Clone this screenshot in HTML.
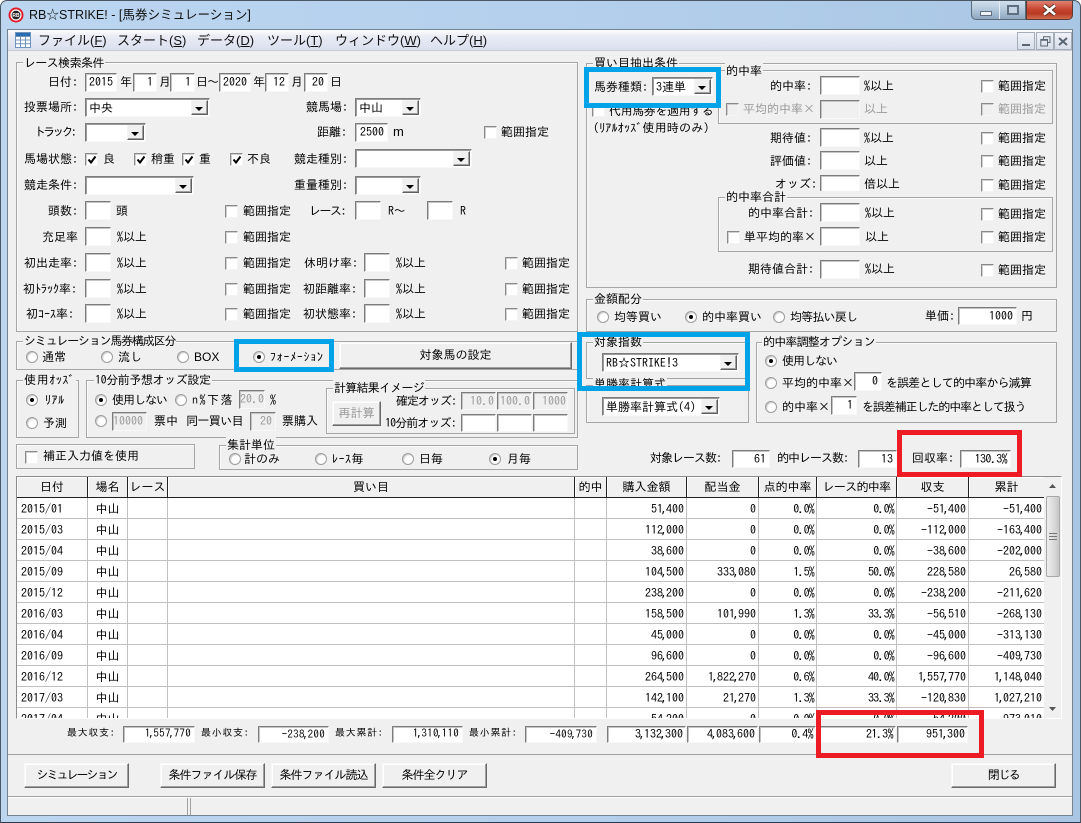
<!DOCTYPE html>
<html lang="ja"><head><meta charset="utf-8"><title>RB☆STRIKE!</title>
<style>
html,body{margin:0;padding:0;width:1081px;height:823px;overflow:hidden;background:#fff}
#w{position:absolute;left:0;top:0;width:1081px;height:823px;overflow:hidden;font:12px/16px "IPAGothic","Noto Sans CJK JP",sans-serif;color:#000;background:linear-gradient(90deg,#bcd6f0,#b4d0ec 50%,#a9c6e4);border-radius:7px 7px 0 0;box-sizing:border-box;border:1px solid #4a5866;border-bottom-color:#2f3a46}
#w *{box-sizing:border-box}
#f{position:absolute;left:-1px;top:-1px;width:1081px;height:823px}
#f div,#f i,#f b,#f svg,#f table{position:absolute}
.t,i{font-style:normal;white-space:nowrap;height:16px;line-height:16px}
em{font-style:normal;margin:0 -1.5px}
.d{color:#9a9a9a}
.i,.c{background:#fff;border:1px solid;border-color:#7c7c7c #f8f8f8 #f8f8f8 #7c7c7c;box-shadow:inset 1px 1px 0 #c4c4c4;font-weight:400;text-align:right;padding-right:3px;line-height:16px;white-space:nowrap}
.c{text-align:left;padding:1px 0 0 3px;box-shadow:inset 1px 1px 0 #9a9a9a}
.dis{background:#f0f0f0;color:#9a9a9a}
.p{letter-spacing:-.6px}
.c s{position:absolute;right:1px;top:1px;bottom:1px;width:17px;background:#f0f0f0;border:1px solid;border-color:#f4f4f4 #5f5f5f #5f5f5f #f4f4f4;box-shadow:inset -1px -1px 0 #a0a0a0;display:block;text-decoration:none}
.c s:after{content:"";position:absolute;left:3px;top:6px;border:4px solid transparent;border-top:4px solid #000;border-bottom:0}
.k{width:13px;height:13px;background:#fff;border:1px solid;border-color:#8a8a8a #f4f4f4 #f4f4f4 #8a8a8a;box-shadow:inset 1px 1px 0 #d0d0d0}
.k.x{background:#f0f0f0}
.k svg{left:1px;top:1px}
.r{width:12px;height:12px;border-radius:50%;background:#fff;border:1px solid #9c9c9c;box-shadow:inset 1px 1px 1px #c8c8c8}
.r.on:after{content:"";position:absolute;left:3px;top:3px;width:4px;height:4px;border-radius:50%;background:#000}
.g{border:1px solid #a6a6a6;box-shadow:inset 1px 1px 0 #fbfbfb}
.b{background:#f0f0f0;border:1px solid;border-color:#f8f8f8 #696969 #696969 #f8f8f8;box-shadow:inset -1px -1px 0 #a0a0a0,inset 1px 1px 0 #fff;text-align:center;white-space:nowrap}
.l{background:#f0f0f0;padding:0 1px}
.blue{border:5px solid #00a2e8}
.red{border:5px solid #ed1c24}
.m{font:13px/16px "Liberation Sans","Noto Sans CJK JP",sans-serif;color:#111}
.tot{font-size:11px;letter-spacing:.3px;line-height:15px}
table{border-collapse:separate;border-spacing:0;table-layout:fixed;left:0;top:0;width:1028px}
td,th{font-weight:400;padding:2px 2px 0 0;height:21px;line-height:18px;text-align:right;border-right:1px solid #c0c0c0;border-bottom:1px solid #c0c0c0;white-space:nowrap;overflow:hidden;background:#fff}
th{background:#f0f0f0;text-align:center;border-right:1px solid #222;border-bottom:1px solid #222;box-shadow:inset 1px 1px 0 #fff;padding:0;line-height:20px}
td:first-child{text-align:left;padding-left:4px}
td:nth-child(2){text-align:center;padding:2px 0 0}
td:nth-child(8),td:nth-child(9){letter-spacing:-.8px}
</style></head><body>
<div id="w"><div id="f">

<svg style="left:8px;top:7px" width="16" height="16" viewBox="0 0 16 16"><circle cx="8" cy="8" r="7.5" fill="#e01b24"/><circle cx="8" cy="8" r="5.6" fill="#fff"/><circle cx="8" cy="8" r="4.4" fill="#222"/><text x="8" y="10" font-size="5" text-anchor="middle" fill="#fff" font-family="Liberation Sans" font-weight="700">RB</text></svg>
<i style="left:29px;top:7px;font:12.55px/16px 'Liberation Sans','Noto Sans CJK JP',sans-serif;height:16px;color:#111">RB☆STRIKE! - [馬券シミュレーション]</i>

<div style="left:971px;top:0;width:55px;height:20px;background:linear-gradient(#d4e2ef,#b4c8dc 50%,#8ea8c0);border:1px solid #5a6a7a;border-top:0;border-radius:0 0 0 5px"></div>
<div style="left:999px;top:0;width:1px;height:19px;background:#e4edf5"></div>
<div style="left:1026px;top:0;width:47px;height:20px;background:linear-gradient(#e0897a,#c8442e 50%,#b83a22 70%,#d06a50);border:1px solid #5a3a32;border-top:0;border-radius:0 0 5px 0"></div>
<div style="left:980px;top:11px;width:12px;height:5px;background:#eef3f8;border:1px solid #5f6f80"></div>
<div style="left:1007px;top:5px;width:12px;height:10px;border:2px solid #5f6f80;background:#c4d4e4"></div>
<svg style="left:1041px;top:4px" width="17" height="12" viewBox="0 0 17 12"><path d="M3 1.5L14 10.5M14 1.5L3 10.5" stroke="#50312b" stroke-width="4.4"/><path d="M3 1.5L14 10.5M14 1.5L3 10.5" stroke="#fff" stroke-width="2.6"/></svg>

<div style="left:7px;top:29px;width:1066px;height:787px;background:#f0f0f0;border:1px solid #75838f"></div>
<div style="left:8px;top:30px;width:1064px;height:21px;background:linear-gradient(#fdfdfe,#e9ecf5 30%,#d9dfee)"></div>
<div style="left:8px;top:50px;width:1064px;height:1px;background:#c6cbd4"></div>
<svg style="left:15px;top:32px" width="16" height="16" viewBox="0 0 16 16"><rect width="16" height="16" fill="#fff"/><rect y="0" width="16" height="4" fill="#2a6db0"/><path d="M.5 .5H15.5V15.5H.5ZM.5 4.5H15.5M.5 8H15.5M.5 11.8H15.5M5.5 4.5V15.5M10.5 4.5V15.5" fill="none" stroke="#6f94bc"/></svg>
<i class="m" style="left:38px;top:33px">ファイル(<u>F</u>)</i>
<i class="m" style="left:117px;top:33px">スタート(<u>S</u>)</i>
<i class="m" style="left:197px;top:33px">データ(<u>D</u>)</i>
<i class="m" style="left:267px;top:33px">ツール(<u>T</u>)</i>
<i class="m" style="left:335px;top:33px">ウィンドウ(<u>W</u>)</i>
<i class="m" style="left:430px;top:33px">ヘルプ(<u>H</u>)</i>
<div style="left:1017px;top:32px;width:18px;height:18px;background:linear-gradient(#f0f2f8,#d8deea);border:1px solid #a4adb8"></div>
<div style="left:1036px;top:32px;width:18px;height:18px;background:linear-gradient(#f0f2f8,#d8deea);border:1px solid #a4adb8"></div>
<div style="left:1054px;top:32px;width:18px;height:18px;background:linear-gradient(#f0f2f8,#d8deea);border:1px solid #a4adb8"></div>
<div style="left:1022px;top:44px;width:8px;height:2px;background:#5a6672"></div>
<svg style="left:1040px;top:36px" width="11" height="11" viewBox="0 0 11 11"><path d="M3.5 3V.8H10V6.5H7.5M.8 3.5H7.5V10H.8ZM.8 4.2H7.5" fill="none" stroke="#5a6672"/></svg>
<svg style="left:1058px;top:37px" width="10" height="9" viewBox="0 0 10 9"><path d="M1 1L9 8M9 1L1 8" stroke="#5a6672" stroke-width="2"/></svg>

<!-- race search -->
<div class="g" style="left:16px;top:62px;width:562px;height:270px"></div>
<i class="t l" style="left:23px;top:55px;letter-spacing:-.6px">レース検索条件</i>
<i class="t" style="left:48px;top:74px">日付:</i>
<b class="i" style="left:85px;top:73px;width:32px;height:19px">2015</b><i class="t" style="left:120px;top:74px">年</i>
<b class="i" style="left:133px;top:73px;width:24px;height:19px">1</b><i class="t" style="left:159px;top:74px">月</i>
<b class="i" style="left:170px;top:73px;width:25px;height:19px">1</b><i class="t" style="left:196px;top:74px;letter-spacing:-1px">日～</i>
<b class="i" style="left:219px;top:73px;width:32px;height:19px">2020</b><i class="t" style="left:253px;top:74px">年</i>
<b class="i" style="left:265px;top:73px;width:24px;height:19px">12</b><i class="t" style="left:291px;top:74px">月</i>
<b class="i" style="left:304px;top:73px;width:24px;height:19px">20</b><i class="t" style="left:330px;top:74px">日</i>

<i class="t" style="left:24px;top:99px">投票場所:</i><b class="c" style="left:85px;top:98px;width:125px;height:19px">中央<s></s></b>
<i class="t" style="left:306px;top:99px">競馬場:</i><b class="c" style="left:355px;top:98px;width:66px;height:19px">中山<s></s></b>
<i class="t" style="left:34px;top:124px;letter-spacing:-2.8px">トラック:</i><b class="c" style="left:85px;top:123px;width:61px;height:19px"><s></s></b>
<i class="t" style="left:317px;top:124px">距離:</i><b class="i" style="left:355px;top:123px;width:33px;height:19px">2500</b><i class="t" style="left:393px;top:124px;font-family:'Liberation Sans',sans-serif;font-size:13px">m</i>
<div class="k" style="left:484px;top:126px"></div><i class="t" style="left:501px;top:124px">範囲指定</i>

<i class="t" style="left:24px;top:151px">馬場状態:</i>
<div class="k" style="left:85px;top:153px"><svg width="10" height="10" viewBox="0 0 10 10"><path d="M1.5 4.5L4 7.5L8.5 1.5" fill="none" stroke="#000" stroke-width="2"/></svg></div><i class="t" style="left:103px;top:151px">良</i>
<div class="k" style="left:134px;top:153px"><svg width="10" height="10" viewBox="0 0 10 10"><path d="M1.5 4.5L4 7.5L8.5 1.5" fill="none" stroke="#000" stroke-width="2"/></svg></div><i class="t" style="left:151px;top:151px">稍重</i>
<div class="k" style="left:182px;top:153px"><svg width="10" height="10" viewBox="0 0 10 10"><path d="M1.5 4.5L4 7.5L8.5 1.5" fill="none" stroke="#000" stroke-width="2"/></svg></div><i class="t" style="left:199px;top:151px">重</i>
<div class="k" style="left:230px;top:153px"><svg width="10" height="10" viewBox="0 0 10 10"><path d="M1.5 4.5L4 7.5L8.5 1.5" fill="none" stroke="#000" stroke-width="2"/></svg></div><i class="t" style="left:247px;top:151px">不良</i>
<i class="t" style="left:294px;top:151px">競走種別:</i><b class="c" style="left:355px;top:149px;width:117px;height:19px"><s></s></b>
<i class="t" style="left:24px;top:177px">競走条件:</i><b class="c" style="left:85px;top:176px;width:109px;height:19px"><s></s></b>
<i class="t" style="left:294px;top:177px">重量種別:</i><b class="c" style="left:355px;top:176px;width:66px;height:19px"><s></s></b>

<i class="t" style="left:48px;top:203px">頭数:</i><b class="i" style="left:85px;top:201px;width:26px;height:19px"></b><i class="t" style="left:116px;top:203px">頭</i>
<div class="k" style="left:225px;top:205px"></div><i class="t" style="left:243px;top:203px">範囲指定</i>
<i class="t" style="left:309px;top:203px;letter-spacing:-1.5px">レース:</i><b class="i" style="left:355px;top:201px;width:26px;height:19px"></b><i class="t" style="left:388px;top:203px;letter-spacing:-.5px">R～</i><b class="i" style="left:427px;top:201px;width:26px;height:19px"></b><i class="t" style="left:460px;top:203px">R</i>

<i class="t" style="left:42px;top:229px">充足率</i><b class="i" style="left:85px;top:227px;width:26px;height:19px"></b><i class="t" style="left:117px;top:229px">%以上</i>
<div class="k" style="left:225px;top:231px"></div><i class="t" style="left:243px;top:229px">範囲指定</i>

<i class="t" style="left:24px;top:255px">初出走率:</i><b class="i" style="left:85px;top:253px;width:26px;height:19px"></b><i class="t" style="left:117px;top:255px">%以上</i>
<div class="k" style="left:225px;top:257px"></div><i class="t" style="left:243px;top:255px">範囲指定</i>
<i class="t" style="left:304px;top:255px">休明け率:</i><b class="i" style="left:364px;top:253px;width:26px;height:19px"></b><i class="t" style="left:396px;top:255px">%以上</i>
<div class="k" style="left:505px;top:257px"></div><i class="t" style="left:522px;top:255px">範囲指定</i>

<i class="t" style="left:23px;top:281px">初ﾄﾗｯｸ率:</i><b class="i" style="left:85px;top:279px;width:26px;height:19px"></b><i class="t" style="left:117px;top:281px">%以上</i>
<div class="k" style="left:225px;top:283px"></div><i class="t" style="left:243px;top:281px">範囲指定</i>
<i class="t" style="left:303px;top:281px">初距離率:</i><b class="i" style="left:364px;top:279px;width:26px;height:19px"></b><i class="t" style="left:396px;top:281px">%以上</i>
<div class="k" style="left:505px;top:283px"></div><i class="t" style="left:522px;top:281px">範囲指定</i>

<i class="t" style="left:26px;top:306px">初ｺｰｽ率:</i><b class="i" style="left:85px;top:304px;width:26px;height:19px"></b><i class="t" style="left:117px;top:306px">%以上</i>
<div class="k" style="left:225px;top:308px"></div><i class="t" style="left:243px;top:306px">範囲指定</i>
<i class="t" style="left:303px;top:306px">初状態率:</i><b class="i" style="left:364px;top:304px;width:26px;height:19px"></b><i class="t" style="left:396px;top:306px">%以上</i>
<div class="k" style="left:505px;top:308px"></div><i class="t" style="left:522px;top:306px">範囲指定</i>

<!-- simulation -->
<div class="g" style="left:16px;top:341px;width:562px;height:29px"></div>
<i class="t l" style="left:23px;top:333px;letter-spacing:-1.2px">シミュレーション馬券構成区分</i>
<div class="r" style="left:26px;top:351px"></div><i class="t" style="left:42px;top:349px">通常</i>
<div class="r" style="left:101px;top:351px"></div><i class="t" style="left:118px;top:349px">流し</i>
<div class="r" style="left:177px;top:351px"></div><i class="t" style="left:194px;top:349px;font-family:'Liberation Sans',sans-serif">BOX</i>
<div class="r on" style="left:253px;top:351px"></div><i class="t" style="left:270px;top:349px;letter-spacing:.7px">ﾌｫｰﾒｰｼｮﾝ</i>
<div class="b" style="left:339px;top:342px;width:233px;height:27px;line-height:24px">対象馬の設定</div>

<!-- odds -->
<div class="g" style="left:16px;top:380px;width:63px;height:58px"></div>
<i class="t l" style="left:23px;top:372px;letter-spacing:.6px">使用ｵｯｽﾞ</i>
<div class="r on" style="left:26px;top:394px"></div><i class="t" style="left:45px;top:392px;letter-spacing:.6px">ﾘｱﾙ</i>
<div class="r" style="left:26px;top:417px"></div><i class="t" style="left:43px;top:415px">予測</i>

<div class="g" style="left:86px;top:380px;width:492px;height:58px"></div>
<i class="t l" style="left:94px;top:372px;letter-spacing:-.4px">10分前予想オッズ設定</i>
<div class="r on" style="left:95px;top:394px"></div><i class="t" style="left:112px;top:392px;letter-spacing:-1px">使用しない</i>
<div class="r" style="left:175px;top:394px"></div><i class="t" style="left:192px;top:392px;letter-spacing:1.5px">n%下落</i>
<b class="i dis" style="left:239px;top:390px;width:26px;height:19px">20.0</b><i class="t" style="left:270px;top:392px">%</i>
<div class="r" style="left:95px;top:415px"></div>
<b class="i dis" style="left:112px;top:412px;width:35px;height:19px">10000</b><i class="t" style="left:154px;top:413px">票中</i><i class="t" style="left:186px;top:413px;letter-spacing:-.6px">同一買い目</i>
<b class="i dis" style="left:250px;top:412px;width:26px;height:19px">20</b><i class="t" style="left:282px;top:413px">票購入</i>

<div class="g" style="left:326px;top:388px;width:249px;height:46px"></div>
<i class="t l" style="left:333px;top:380px;letter-spacing:-.75px">計算結果イメージ</i>
<div class="b d" style="left:332px;top:401px;width:49px;height:25px;line-height:22px">再計算</div>
<i class="t" style="left:396px;top:393px;letter-spacing:-1px">確定オッズ:</i>
<b class="i dis" style="left:461px;top:392px;width:35px;height:18px;padding-right:1px">10.0</b><b class="i dis" style="left:497px;top:392px;width:35px;height:18px;padding-right:1px">100.0</b><b class="i dis" style="left:533px;top:392px;width:35px;height:18px;padding-right:1px">1000</b>
<i class="t" style="left:385px;top:415px;letter-spacing:-.9px">10分前オッズ:</i>
<b class="i" style="left:461px;top:414px;width:35px;height:18px"></b><b class="i" style="left:497px;top:414px;width:35px;height:18px"></b><b class="i" style="left:533px;top:414px;width:35px;height:18px"></b>

<div class="g" style="left:16px;top:444px;width:179px;height:25px"></div>
<div class="k" style="left:25px;top:451px"></div><i class="t" style="left:43px;top:448px">補正入力値を使用</i>
<div class="g" style="left:219px;top:445px;width:359px;height:25px"></div>
<i class="t l" style="left:226px;top:437px">集計単位</i>
<div class="r" style="left:229px;top:453px"></div><i class="t" style="left:244px;top:451px">計のみ</i>
<div class="r" style="left:315px;top:453px"></div><i class="t" style="left:332px;top:451px;letter-spacing:.5px">ﾚｰｽ毎</i>
<div class="r" style="left:402px;top:453px"></div><i class="t" style="left:419px;top:451px">日毎</i>
<div class="r on" style="left:489px;top:453px"></div><i class="t" style="left:507px;top:451px">月毎</i>

<!-- right -->
<div class="g" style="left:586px;top:63px;width:471px;height:225px"></div>
<i class="t l" style="left:593px;top:55px">買い目抽出条件</i>
<div class="k" style="left:592px;top:104px"></div><i class="t" style="left:609px;top:103px;letter-spacing:-.4px">代用馬券を適用する</i>
<i class="t" style="left:593px;top:120px;letter-spacing:.2px">(ﾘｱﾙｵｯｽﾞ使用時のみ)</i>
<i class="t" style="left:594px;top:79px">馬券種類:</i><b class="c" style="left:652px;top:77px;width:61px;height:19px">3連単<s></s></b>

<div class="g" style="left:718px;top:70px;width:335px;height:54px"></div>
<i class="t l" style="left:725px;top:63px">的中率</i>
<i class="t" style="left:770px;top:78px">的中率:</i><b class="i" style="left:820px;top:76px;width:40px;height:19px"></b><i class="t" style="left:864px;top:78px">%以上</i><div class="k" style="left:981px;top:80px"></div><i class="t" style="left:998px;top:78px">範囲指定</i>
<div class="k x" style="left:726px;top:103px"></div><i class="t d" style="left:743px;top:101px">平均的中率×</i><b class="i dis" style="left:820px;top:100px;width:40px;height:19px"></b><i class="t d" style="left:864px;top:101px">以上</i><div class="k x" style="left:981px;top:103px"></div><i class="t d" style="left:998px;top:101px">範囲指定</i>
<i class="t" style="left:770px;top:130px">期待値:</i><b class="i" style="left:820px;top:128px;width:40px;height:19px"></b><i class="t" style="left:864px;top:130px">%以上</i><div class="k" style="left:981px;top:132px"></div><i class="t" style="left:998px;top:130px">範囲指定</i>
<i class="t" style="left:770px;top:153px">評価値:</i><b class="i" style="left:820px;top:151px;width:40px;height:19px"></b><i class="t" style="left:864px;top:153px">以上</i><div class="k" style="left:981px;top:155px"></div><i class="t" style="left:998px;top:153px">範囲指定</i>
<i class="t" style="left:775px;top:176px">オッズ:</i><b class="i" style="left:820px;top:175px;width:40px;height:16px;border-bottom:0"></b><i class="t" style="left:864px;top:176px">倍以上</i><div class="k" style="left:981px;top:179px"></div><i class="t" style="left:998px;top:177px">範囲指定</i>

<div class="g" style="left:718px;top:197px;width:335px;height:55px"></div>
<i class="t l" style="left:725px;top:189px">的中率合計</i>
<i class="t" style="left:748px;top:205px">的中率合計:</i><b class="i" style="left:820px;top:203px;width:40px;height:19px"></b><i class="t" style="left:865px;top:205px">%以上</i><div class="k" style="left:981px;top:208px"></div><i class="t" style="left:998px;top:206px">範囲指定</i>
<div class="k" style="left:727px;top:231px"></div><i class="t" style="left:744px;top:229px">単平均的率×</i><b class="i" style="left:820px;top:227px;width:40px;height:19px"></b><i class="t" style="left:865px;top:229px">以上</i><div class="k" style="left:981px;top:231px"></div><i class="t" style="left:998px;top:229px">範囲指定</i>
<i class="t" style="left:748px;top:261px">期待値合計:</i><b class="i" style="left:820px;top:260px;width:40px;height:19px"></b><i class="t" style="left:865px;top:261px">%以上</i><div class="k" style="left:981px;top:264px"></div><i class="t" style="left:998px;top:262px">範囲指定</i>

<div class="g" style="left:586px;top:299px;width:471px;height:33px"></div>
<i class="t l" style="left:593px;top:291px">金額配分</i>
<div class="r" style="left:597px;top:311px"></div><i class="t" style="left:614px;top:309px">均等買い</i>
<div class="r on" style="left:685px;top:311px"></div><i class="t" style="left:702px;top:309px">的中率買い</i>
<div class="r" style="left:773px;top:311px"></div><i class="t" style="left:790px;top:309px;letter-spacing:-.8px">均等払い戻し</i>
<i class="t" style="left:925px;top:308px">単価:</i><b class="i" style="left:958px;top:307px;width:59px;height:18px">1000</b><i class="t" style="left:1021px;top:308px">円</i>

<div class="g" style="left:586px;top:342px;width:163px;height:37px"></div>
<i class="t l" style="left:593px;top:334px">対象指数</i>
<b class="c" style="left:602px;top:353px;width:137px;height:19px">RB☆STRIKE!3<s></s></b>
<div class="g" style="left:586px;top:385px;width:163px;height:38px"></div>
<i class="t l" style="left:593px;top:376px">単勝率計算式</i>
<b class="c" style="left:602px;top:397px;width:118px;height:19px">単勝率計算式(4)<s></s></b>

<div class="g" style="left:756px;top:342px;width:301px;height:81px"></div>
<i class="t l" style="left:762px;top:334px;letter-spacing:-.8px">的中率調整オプション</i>
<div class="r on" style="left:765px;top:355px"></div><i class="t" style="left:782px;top:353px;letter-spacing:-1px">使用しない</i>
<div class="r" style="left:765px;top:377px"></div><i class="t" style="left:782px;top:375px">平均的中率×</i><b class="i" style="left:854px;top:372px;width:28px;height:19px">0</b><i class="t" style="left:886px;top:375px;letter-spacing:-.85px">を誤差として的中率から減算</i>
<div class="r" style="left:765px;top:401px"></div><i class="t" style="left:782px;top:399px">的中率×</i><b class="i" style="left:831px;top:396px;width:26px;height:19px">1</b><i class="t" style="left:862px;top:399px;letter-spacing:-1.1px">を誤差補正した的中率として扱う</i>

<i class="t" style="left:650px;top:450px;letter-spacing:-1px">対象レース数:</i><b class="i" style="left:732px;top:450px;width:38px;height:18px">61</b>
<i class="t" style="left:777px;top:450px;letter-spacing:-1px">的中レース数:</i><b class="i" style="left:858px;top:450px;width:39px;height:18px">13</b>
<i class="t" style="left:912px;top:450px">回収率:</i><b class="i p" style="left:960px;top:450px;width:51px;height:18px">130.3%</b>

<!-- table -->
<div style="left:16px;top:476px;width:1046px;height:243px;background:#f0f0f0;border:1px solid #8c8c8c;border-right-color:#fff;border-bottom-color:#fff"></div>
<div style="left:17px;top:477px;width:1027px;height:241px;overflow:hidden;background:#fff">
<table><colgroup><col style="width:71px"><col style="width:40px"><col style="width:40px"><col style="width:407px"><col style="width:32px"><col style="width:80px"><col style="width:72px"><col style="width:58px"><col style="width:80px"><col style="width:72px"><col style="width:76px"></colgroup>
<tr><th>日付</th><th>場名</th><th>レース</th><th>買い目</th><th>的中</th><th>購入金額</th><th>配当金</th><th>点的中率</th><th style="letter-spacing:-.7px">レース的中率</th><th>収支</th><th>累計</th></tr>
<tr><td>2015/01</td><td>中山</td><td></td><td></td><td></td><td>51<em>,</em>400</td><td>0</td><td>0.0%</td><td>0.0%</td><td>-51<em>,</em>400</td><td>-51<em>,</em>400</td></tr>
<tr><td>2015/03</td><td>中山</td><td></td><td></td><td></td><td>112<em>,</em>000</td><td>0</td><td>0.0%</td><td>0.0%</td><td>-112<em>,</em>000</td><td>-163<em>,</em>400</td></tr>
<tr><td>2015/04</td><td>中山</td><td></td><td></td><td></td><td>38<em>,</em>600</td><td>0</td><td>0.0%</td><td>0.0%</td><td>-38<em>,</em>600</td><td>-202<em>,</em>000</td></tr>
<tr><td>2015/09</td><td>中山</td><td></td><td></td><td></td><td>104<em>,</em>500</td><td>333<em>,</em>080</td><td>1.5%</td><td>50.0%</td><td>228<em>,</em>580</td><td>26<em>,</em>580</td></tr>
<tr><td>2015/12</td><td>中山</td><td></td><td></td><td></td><td>238<em>,</em>200</td><td>0</td><td>0.0%</td><td>0.0%</td><td>-238<em>,</em>200</td><td>-211<em>,</em>620</td></tr>
<tr><td>2016/03</td><td>中山</td><td></td><td></td><td></td><td>158<em>,</em>500</td><td>101<em>,</em>990</td><td>1.3%</td><td>33.3%</td><td>-56<em>,</em>510</td><td>-268<em>,</em>130</td></tr>
<tr><td>2016/04</td><td>中山</td><td></td><td></td><td></td><td>45<em>,</em>000</td><td>0</td><td>0.0%</td><td>0.0%</td><td>-45<em>,</em>000</td><td>-313<em>,</em>130</td></tr>
<tr><td>2016/09</td><td>中山</td><td></td><td></td><td></td><td>96<em>,</em>600</td><td>0</td><td>0.0%</td><td>0.0%</td><td>-96<em>,</em>600</td><td>-409<em>,</em>730</td></tr>
<tr><td>2016/12</td><td>中山</td><td></td><td></td><td></td><td>264<em>,</em>500</td><td>1<em>,</em>822<em>,</em>270</td><td>0.6%</td><td>40.0%</td><td>1<em>,</em>557<em>,</em>770</td><td>1<em>,</em>148<em>,</em>040</td></tr>
<tr><td>2017/03</td><td>中山</td><td></td><td></td><td></td><td>142<em>,</em>100</td><td>21<em>,</em>270</td><td>1.3%</td><td>33.3%</td><td>-120<em>,</em>830</td><td>1<em>,</em>027<em>,</em>210</td></tr>
<tr><td>2017/04</td><td>中山</td><td></td><td></td><td></td><td>54<em>,</em>200</td><td>0</td><td>0.0%</td><td>0.0%</td><td>-54<em>,</em>200</td><td>973<em>,</em>010</td></tr>
</table></div>
<svg style="left:1048px;top:483px" width="9" height="6" viewBox="0 0 9 6"><path d="M4.5 1L1 5H8Z" fill="#555"/></svg>
<svg style="left:1048px;top:706px" width="9" height="6" viewBox="0 0 9 6"><path d="M4.5 5L1 1H8Z" fill="#555"/></svg>
<div style="left:1046px;top:496px;width:14px;height:81px;background:linear-gradient(90deg,#eee,#dcdcdc 50%,#c8c8c8);border:1px solid #a8a8a8;border-radius:2px"></div>
<div style="left:1049px;top:533px;width:8px;height:7px;border-top:1px solid #777;border-bottom:1px solid #777"></div>
<div style="left:1049px;top:536px;width:8px;height:1px;background:#777"></div>

<!-- totals -->
<i class="t" style="left:67px;top:725px;font-size:10px;letter-spacing:.7px">最大収支:</i><b class="i tot" style="left:123px;top:726px;width:72px;height:17px;line-height:13px">1<em>,</em>557<em>,</em>770</b>
<i class="t" style="left:201px;top:725px;font-size:10px;letter-spacing:.7px">最小収支:</i><b class="i tot" style="left:258px;top:726px;width:71px;height:17px">-238<em>,</em>200</b>
<i class="t" style="left:335px;top:725px;font-size:10px;letter-spacing:.7px">最大累計:</i><b class="i tot" style="left:392px;top:726px;width:71px;height:17px;line-height:13px">1<em>,</em>310<em>,</em>110</b>
<i class="t" style="left:469px;top:725px;font-size:10px;letter-spacing:.7px">最小累計:</i><b class="i tot" style="left:525px;top:726px;width:72px;height:17px">-409<em>,</em>730</b>
<b class="i" style="left:607px;top:726px;width:79px;height:17px;line-height:15px;padding-right:2px">3<em>,</em>132<em>,</em>300</b>
<b class="i" style="left:687px;top:726px;width:71px;height:17px;line-height:15px;padding-right:2px">4<em>,</em>083<em>,</em>600</b>
<b class="i p" style="left:759px;top:726px;width:57px;height:17px;line-height:15px;padding-right:2px">0.4%</b>
<b class="i p" style="left:817px;top:726px;width:79px;height:17px;line-height:15px;padding-right:2px">21.3%</b>
<b class="i" style="left:897px;top:726px;width:71px;height:17px;line-height:15px;padding-right:2px">951<em>,</em>300</b>

<div style="left:8px;top:754px;width:1064px;height:1px;background:#a0a0a0"></div>
<div class="b" style="left:24px;top:763px;width:105px;height:25px;line-height:22px;letter-spacing:-2px">シミュレーション</div>
<div class="b" style="left:160px;top:763px;width:105px;height:25px;line-height:22px;letter-spacing:-1px">条件ファイル保存</div>
<div class="b" style="left:271px;top:763px;width:105px;height:25px;line-height:22px;letter-spacing:-1px">条件ファイル読込</div>
<div class="b" style="left:382px;top:763px;width:105px;height:25px;line-height:22px;letter-spacing:-1px">条件全クリア</div>
<div class="b" style="left:951px;top:763px;width:105px;height:25px;line-height:22px;letter-spacing:-1.5px">閉じる</div>

<div style="left:8px;top:796px;width:1064px;height:1px;background:#a0a0a0"></div>
<div style="left:8px;top:797px;width:1064px;height:1px;background:#fff"></div>
<div style="left:187px;top:798px;width:1px;height:17px;background:#a0a0a0"></div>
<div style="left:190px;top:798px;width:1px;height:17px;background:#a0a0a0"></div>

<!-- highlight frames -->
<div class="blue" style="left:584px;top:67px;width:137px;height:41px"></div>
<div class="blue" style="left:234px;top:339px;width:100px;height:33px"></div>
<div class="blue" style="left:577px;top:332px;width:173px;height:59px"></div>
<div class="red" style="left:897px;top:430px;width:125px;height:47px"></div>
<div class="red" style="left:816px;top:710px;width:168px;height:48px"></div>

</div></div>
</body></html>
